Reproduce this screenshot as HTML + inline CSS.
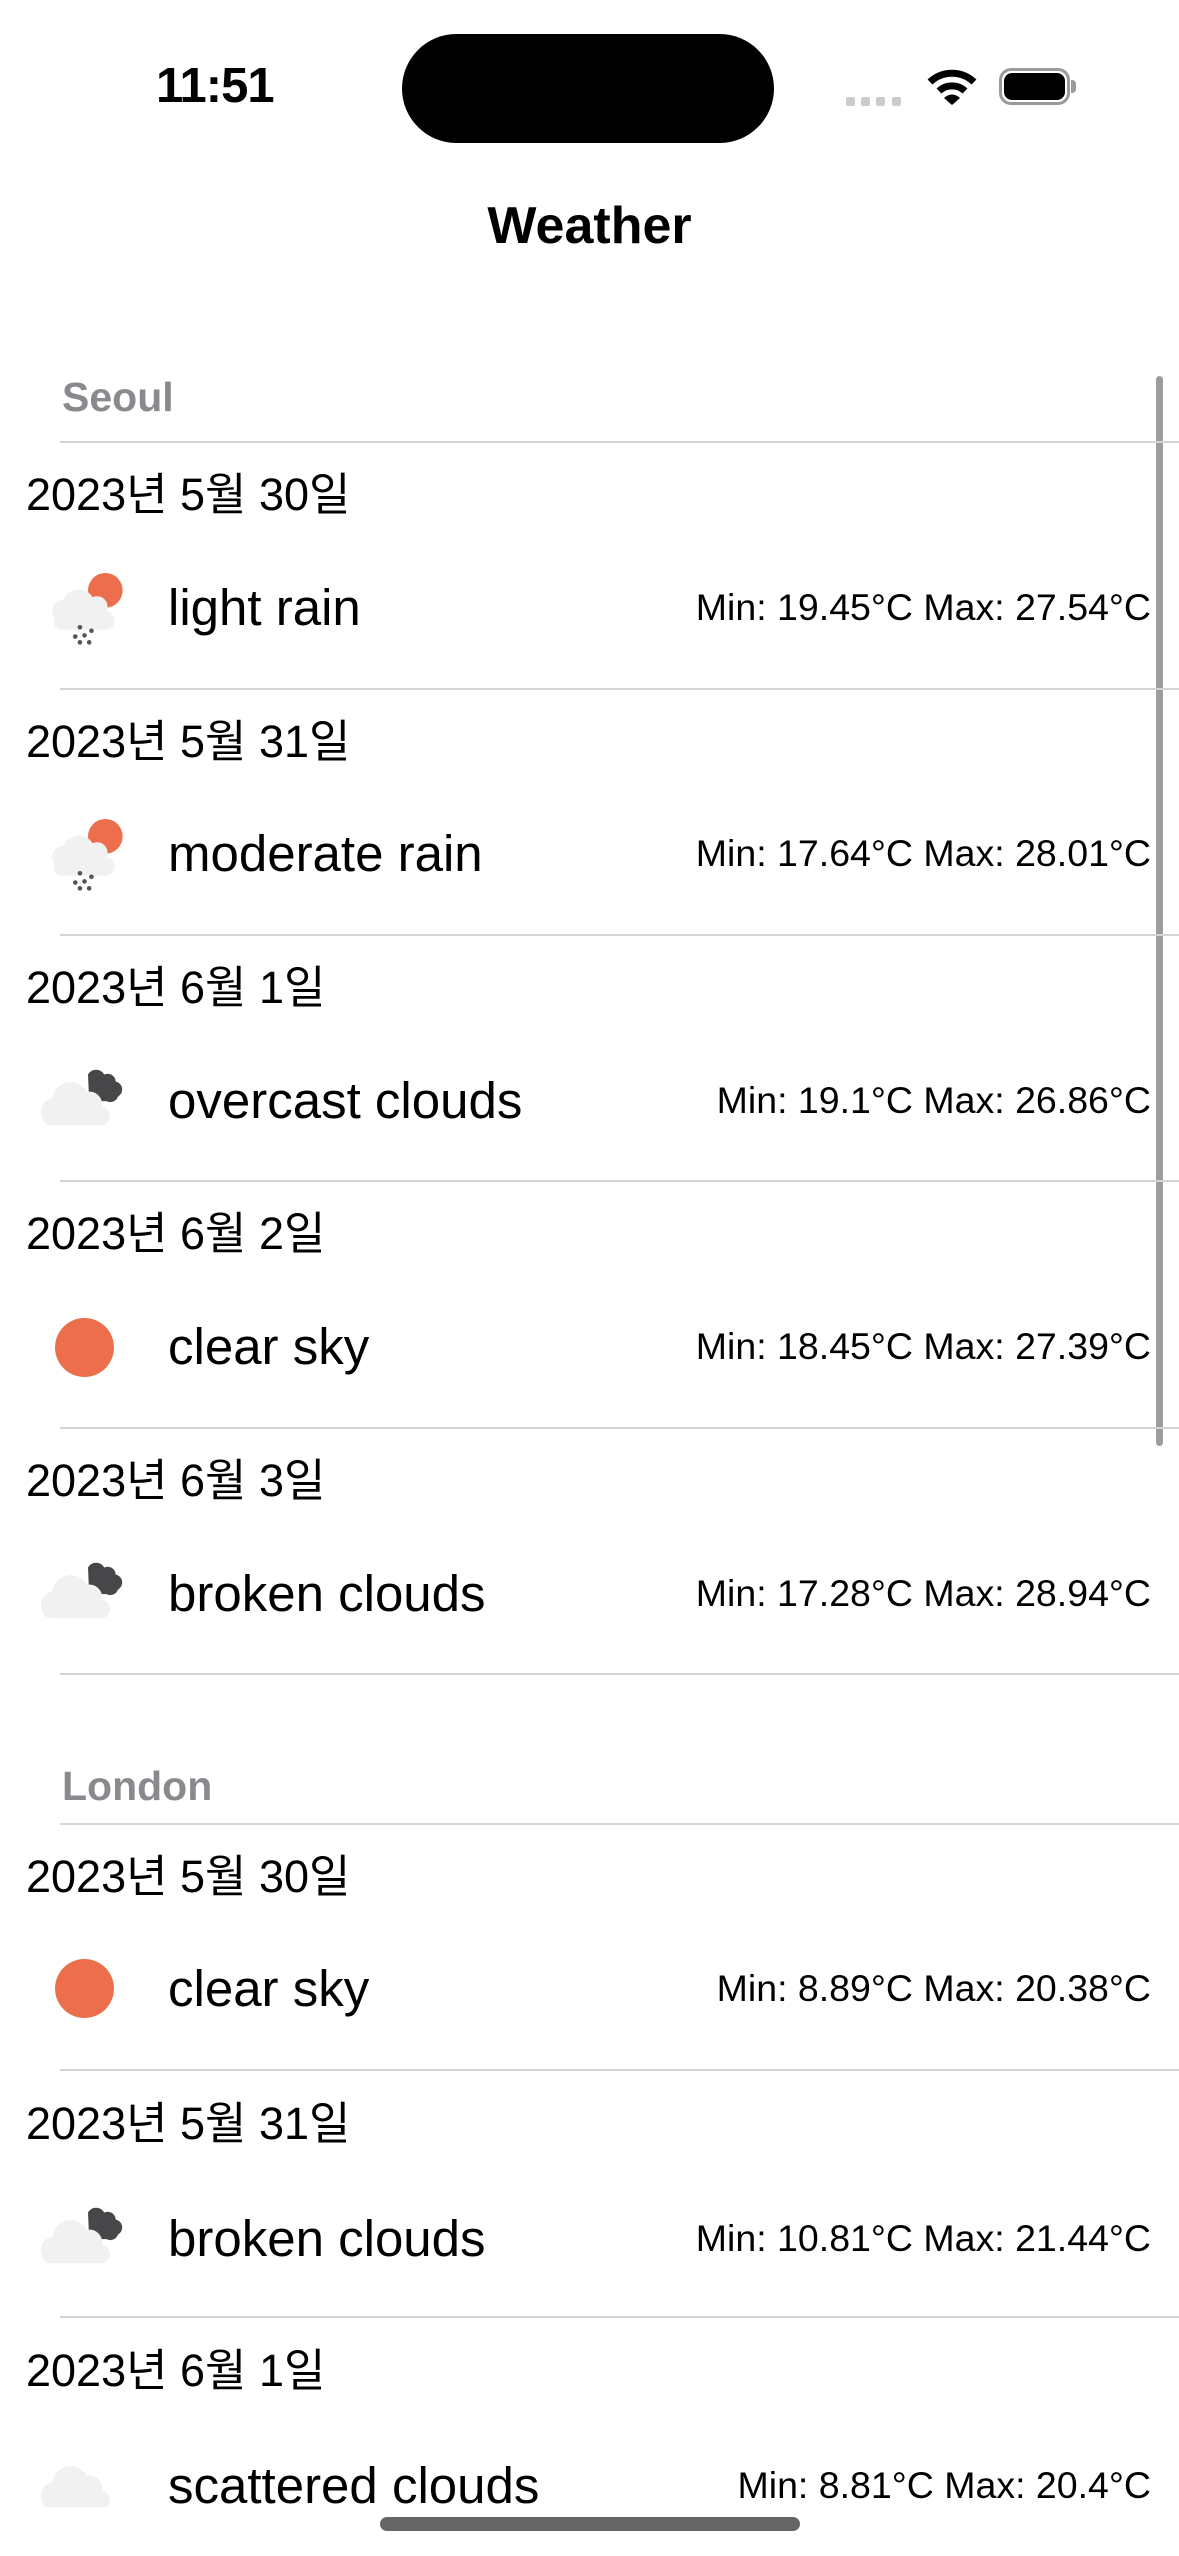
<!DOCTYPE html>
<html><head><meta charset="utf-8"><style>
*{margin:0;padding:0;box-sizing:border-box}
body{width:1179px;height:2556px;background:#fff;position:relative;overflow:hidden;font-family:"Liberation Sans","Noto Sans CJK KR",sans-serif;color:#000}
.a{position:absolute}
.sep{position:absolute;left:60px;right:0;height:2px;background:#d4d4d6}
.hdr{position:absolute;left:62px;font-size:41px;font-weight:bold;color:#8a8a8e}
.date{position:absolute;left:26px;font-size:45px;line-height:50px}
.lab{position:absolute;left:168px;font-size:51px;line-height:60px}
.mm{position:absolute;right:28px;font-size:37.5px;line-height:44px;white-space:nowrap}
.ic{position:absolute;left:36px;width:104px;height:81px}
</style></head><body>
<div class="a" style="left:156px;top:58px;font-size:49px;font-weight:bold;letter-spacing:-1px">11:51</div>
<div class="a" style="left:402px;top:34px;width:372px;height:109px;background:#000;border-radius:55px"></div>
<div class="a" style="left:846px;top:97px;width:9px;height:9px;border-radius:2px;background:#ccc"></div>
<div class="a" style="left:861px;top:97px;width:9px;height:9px;border-radius:2px;background:#ccc"></div>
<div class="a" style="left:876px;top:97px;width:9px;height:9px;border-radius:2px;background:#ccc"></div>
<div class="a" style="left:892px;top:97px;width:9px;height:9px;border-radius:2px;background:#ccc"></div>
<svg class="a" style="left:927px;top:68px" width="50" height="38" viewBox="0 0 50 38">
<path d="M3 14 A32 32 0 0 1 47 14" stroke="#000" stroke-width="7" fill="none"/>
<path d="M12 23 A19 19 0 0 1 38 23" stroke="#000" stroke-width="7" fill="none"/>
<path d="M17 30 L25 37 L33 30 A11 11 0 0 0 17 30Z" fill="#000"/></svg>
<div class="a" style="left:999px;top:68px;width:71px;height:37px;border:3px solid #9a9a9a;border-radius:12px"></div>
<div class="a" style="left:1004px;top:73px;width:61px;height:27px;background:#000;border-radius:8px"></div>
<div class="a" style="left:1071px;top:80px;width:5px;height:13px;background:#9a9a9a;border-radius:0 4px 4px 0"></div>
<div class="a" style="left:0;width:1179px;top:196px;text-align:center;font-size:52px;font-weight:bold">Weather</div>
<div class="a" style="left:1156px;top:376px;width:7px;height:1070px;background:#9d9d9d;border-radius:4px"></div>

<div class="hdr" style="top:374px">Seoul</div>
<div class="sep" style="top:441px"></div>
<div class="date" style="top:470px">2023년 5월 30일</div>
<svg class="ic" style="top:566px" viewBox="0 0 90 70"><circle cx="60" cy="21" r="15" fill="#ec6e4c"/><path d="M16 45 a10 10 0 0 1 8-16 a14 14 0 0 1 25-2 a9 9 0 0 1 12 12 a8 8 0 0 1 -2 16 H20 a8 8 0 0 1-4-10z" fill="#f1f1f1"/><g fill="#555"><circle cx="38" cy="53" r="2"/><circle cx="34" cy="61" r="2"/><circle cx="42" cy="60" r="2"/><circle cx="48" cy="56" r="2"/><circle cx="38" cy="66" r="2"/><circle cx="46" cy="66" r="2"/></g></svg>
<div class="lab" style="top:578px">light rain</div>
<div class="mm" style="top:585px">Min: 19.45°C Max: 27.54°C</div>

<div class="sep" style="top:688px"></div>
<div class="date" style="top:717px">2023년 5월 31일</div>
<svg class="ic" style="top:812px" viewBox="0 0 90 70"><circle cx="60" cy="21" r="15" fill="#ec6e4c"/><path d="M16 45 a10 10 0 0 1 8-16 a14 14 0 0 1 25-2 a9 9 0 0 1 12 12 a8 8 0 0 1 -2 16 H20 a8 8 0 0 1-4-10z" fill="#f1f1f1"/><g fill="#555"><circle cx="38" cy="53" r="2"/><circle cx="34" cy="61" r="2"/><circle cx="42" cy="60" r="2"/><circle cx="48" cy="56" r="2"/><circle cx="38" cy="66" r="2"/><circle cx="46" cy="66" r="2"/></g></svg>
<div class="lab" style="top:824px">moderate rain</div>
<div class="mm" style="top:831px">Min: 17.64°C Max: 28.01°C</div>

<div class="sep" style="top:934px"></div>
<div class="date" style="top:963px">2023년 6월 1일</div>
<svg class="ic" style="top:1056px" viewBox="0 0 90 70"><path d="M45 16 a8 8 0 0 1 14 0 a7 7 0 0 1 10 6 a7 7 0 0 1 2 13 a7 7 0 0 1-10 4 H46z" fill="#47474a"/><path d="M5 52 a11 11 0 0 1 9-15 a16 16 0 0 1 30-6 a11 11 0 0 1 13 13 a8 8 0 0 1 -2 16 H13 a8 8 0 0 1-8-8z" fill="#f1f1f1"/></svg>
<div class="lab" style="top:1071px">overcast clouds</div>
<div class="mm" style="top:1078px">Min: 19.1°C Max: 26.86°C</div>

<div class="sep" style="top:1180px"></div>
<div class="date" style="top:1209px">2023년 6월 2일</div>
<div class="a" style="left:55px;top:1318px;width:59px;height:59px;border-radius:50%;background:#ec6e4c"></div>
<div class="lab" style="top:1317px">clear sky</div>
<div class="mm" style="top:1324px">Min: 18.45°C Max: 27.39°C</div>

<div class="sep" style="top:1427px"></div>
<div class="date" style="top:1456px">2023년 6월 3일</div>
<svg class="ic" style="top:1549px" viewBox="0 0 90 70"><path d="M45 16 a8 8 0 0 1 14 0 a7 7 0 0 1 10 6 a7 7 0 0 1 2 13 a7 7 0 0 1-10 4 H46z" fill="#47474a"/><path d="M5 52 a11 11 0 0 1 9-15 a16 16 0 0 1 30-6 a11 11 0 0 1 13 13 a8 8 0 0 1 -2 16 H13 a8 8 0 0 1-8-8z" fill="#f1f1f1"/></svg>
<div class="lab" style="top:1564px">broken clouds</div>
<div class="mm" style="top:1571px">Min: 17.28°C Max: 28.94°C</div>
<div class="sep" style="top:1673px"></div>

<div class="hdr" style="top:1763px">London</div>
<div class="sep" style="top:1823px"></div>
<div class="date" style="top:1852px">2023년 5월 30일</div>
<div class="a" style="left:55px;top:1959px;width:59px;height:59px;border-radius:50%;background:#ec6e4c"></div>
<div class="lab" style="top:1959px">clear sky</div>
<div class="mm" style="top:1966px">Min: 8.89°C Max: 20.38°C</div>

<div class="sep" style="top:2069px"></div>
<div class="date" style="top:2099px">2023년 5월 31일</div>
<svg class="ic" style="top:2194px" viewBox="0 0 90 70"><path d="M45 16 a8 8 0 0 1 14 0 a7 7 0 0 1 10 6 a7 7 0 0 1 2 13 a7 7 0 0 1-10 4 H46z" fill="#47474a"/><path d="M5 52 a11 11 0 0 1 9-15 a16 16 0 0 1 30-6 a11 11 0 0 1 13 13 a8 8 0 0 1 -2 16 H13 a8 8 0 0 1-8-8z" fill="#f1f1f1"/></svg>
<div class="lab" style="top:2209px">broken clouds</div>
<div class="mm" style="top:2216px">Min: 10.81°C Max: 21.44°C</div>

<div class="sep" style="top:2316px"></div>
<div class="date" style="top:2346px">2023년 6월 1일</div>
<div class="a" style="left:0;top:2420px;width:1179px;height:87px;overflow:hidden">
<svg class="ic" style="top:20px" viewBox="0 0 90 70"><path d="M5 52 a11 11 0 0 1 9-15 a16 16 0 0 1 30-6 a11 11 0 0 1 13 13 a8 8 0 0 1 -2 16 H13 a8 8 0 0 1-8-8z" fill="#f1f1f1"/></svg>
<div class="lab" style="top:36px">scattered clouds</div>
<div class="mm" style="top:43px">Min: 8.81°C Max: 20.4°C</div>
</div>
<div class="a" style="left:380px;top:2517px;width:420px;height:14px;border-radius:7px;background:#666"></div>
</body></html>
